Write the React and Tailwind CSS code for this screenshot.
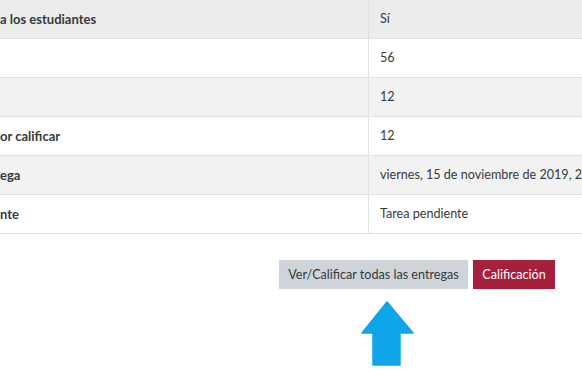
export default function App() {
  const rows = [
    { k: "a los estudiantes", v: "Sí", bg: "bg-[#ececec]" },
    { k: "", v: "56", bg: "bg-white" },
    { k: "", v: "12", bg: "bg-[#f2f2f2]" },
    { k: "or calificar", v: "12", bg: "bg-white" },
    { k: "ega", v: "viernes, 15 de noviembre de 2019, 23:59", bg: "bg-[#f2f2f2]" },
    { k: "nte", v: "Tarea pendiente", bg: "bg-white" },
  ];
  return (
    <div
      className="w-[582px] h-[373px] overflow-hidden bg-white text-[#373a3c]"
      style={{ fontFamily: 'Lato, "Open Sans", sans-serif' }}
    >
      <div className="flex flex-col">
        {rows.map((r, i) => (
          <div
            key={i}
            className={`flex h-[39px] border-b border-[#dee2e6] ${r.bg}`}
          >
            <div className="w-[368px] shrink-0 flex items-center pt-[1px] text-[13px] font-bold whitespace-nowrap overflow-hidden">
              {r.k}
            </div>
            <div className="flex-1 flex items-center pt-[1px] pl-[11px] border-l border-[#dee2e6] text-[12.6px] whitespace-nowrap overflow-hidden">
              {r.v}
            </div>
          </div>
        ))}
      </div>
      <div className="flex justify-end pr-[27px] mt-[26px] gap-[5px]">
        <button className="h-[29px] w-[189px] pt-[2px] bg-[#ced4da] text-[#373a3c] text-[12.6px] flex items-center justify-center">
          Ver/Calificar todas las entregas
        </button>
        <button className="h-[29px] w-[82px] pt-[2px] bg-[#a6203c] text-white text-[12.6px] flex items-center justify-center">
          Calificación
        </button>
      </div>
      <div className="ml-[361px] mt-[12px]">
        <svg width="53" height="65" viewBox="0 0 53 65">
          <path
            d="M26 1 L52 32 L39 32 L39 64 L12 64 L12 32 L1 32 Z"
            fill="#0ea5e9"
            stroke="#0ea5e9"
            strokeLinejoin="round"
            strokeWidth="1.5"
          />
        </svg>
      </div>
    </div>
  );
}
